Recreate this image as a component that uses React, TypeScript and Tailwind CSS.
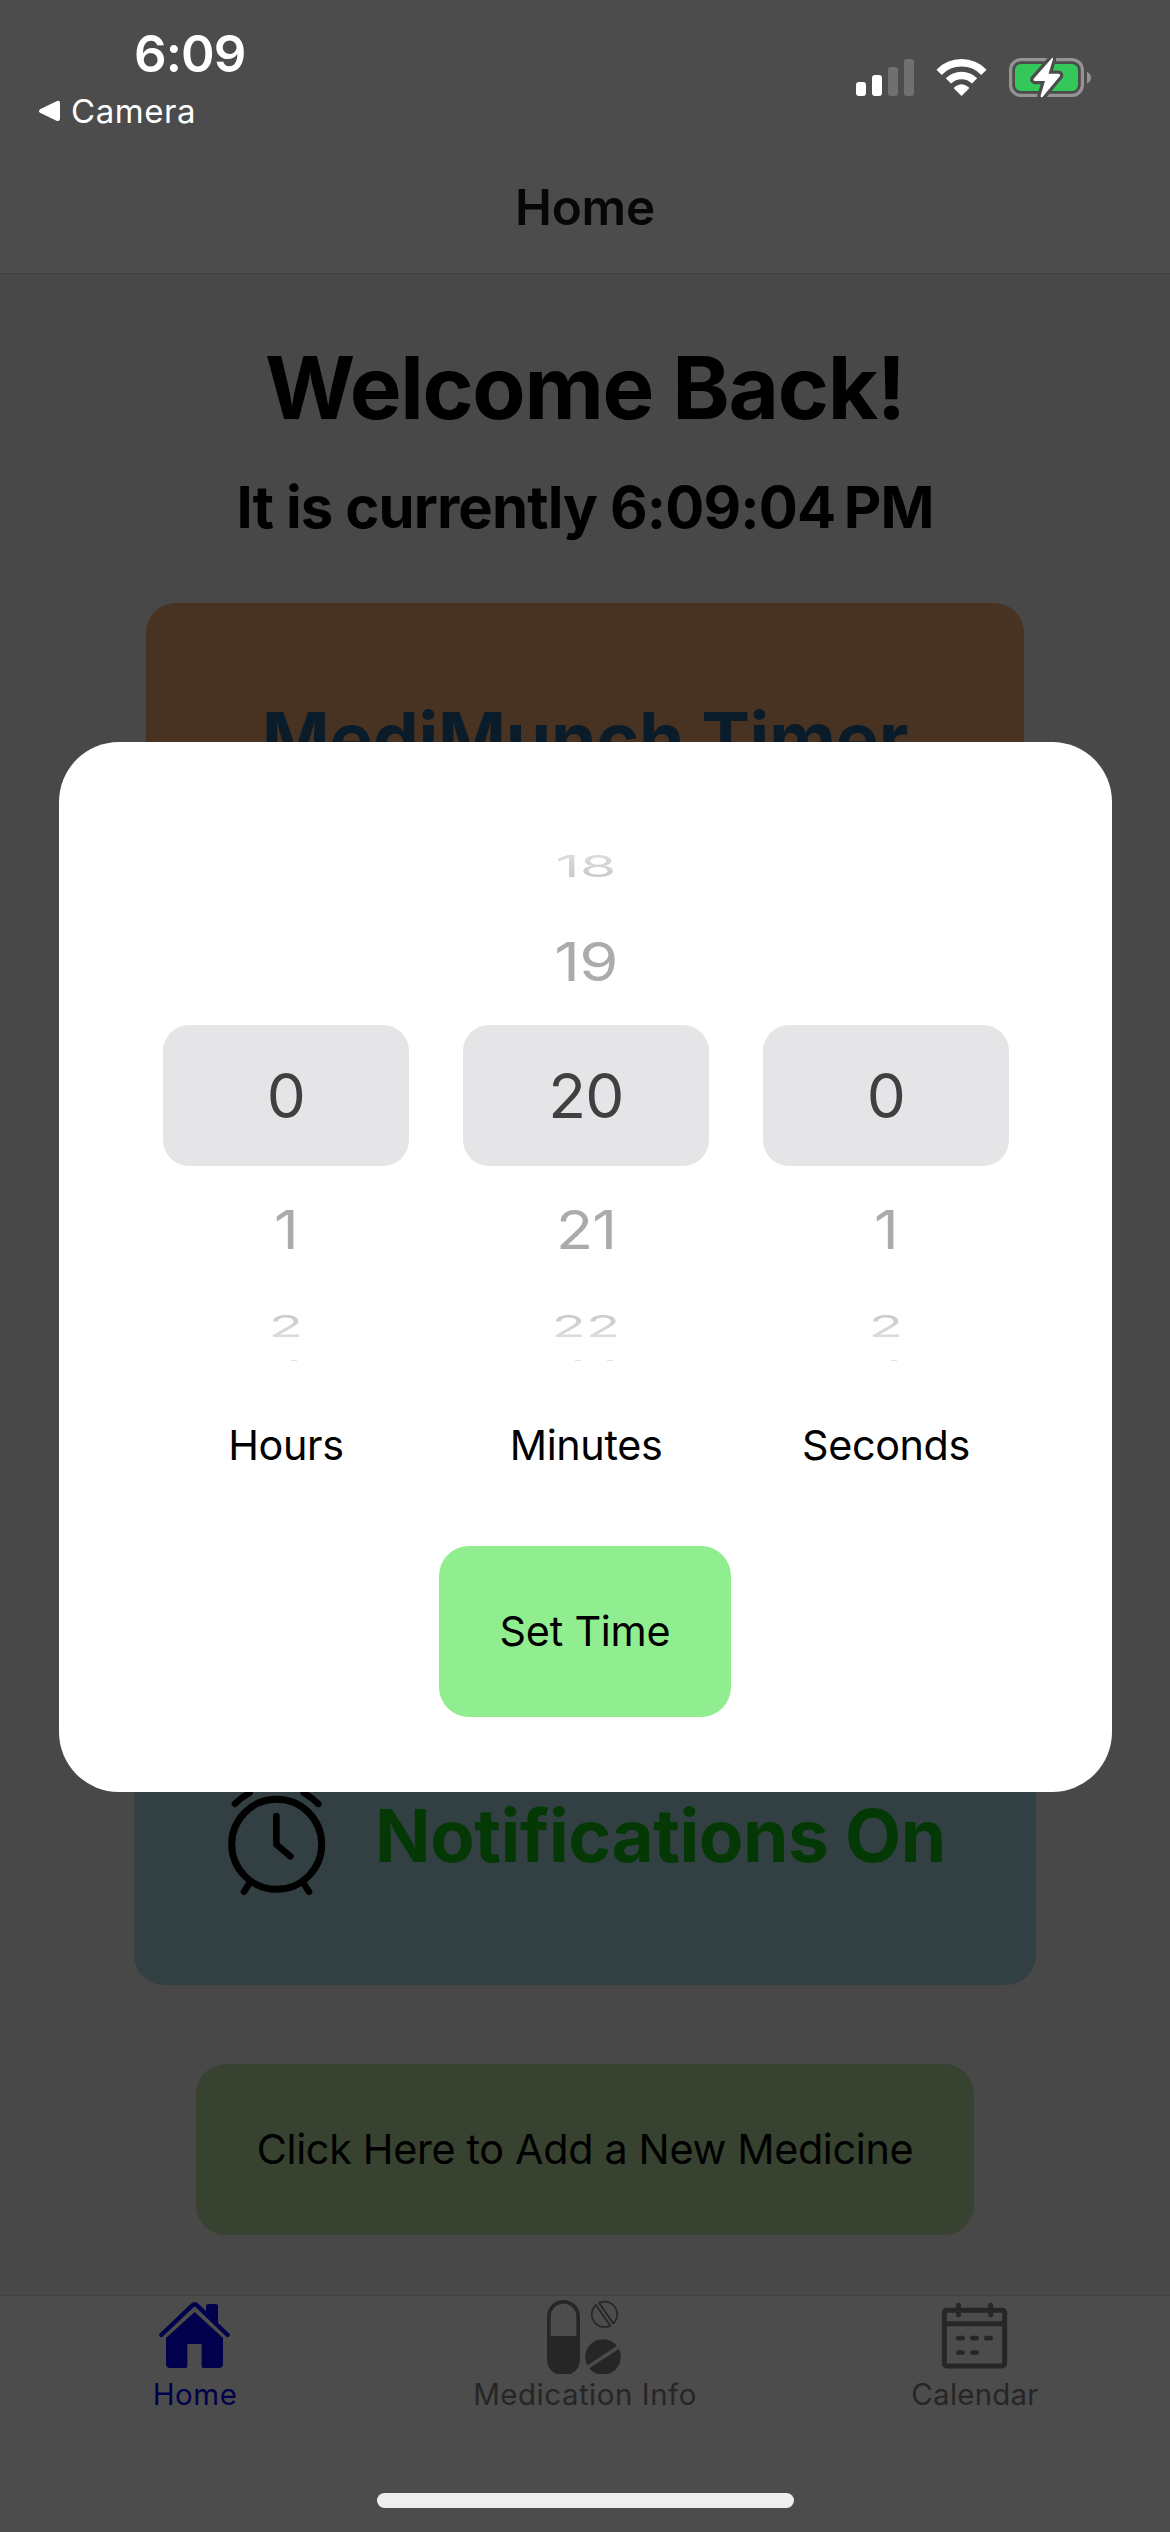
type Row = { label: string; values: [string, string, string, string, string]; marks: string[] };

const columns: Row[] = [
  { label: "Hours", values: ["", "", "0", "1", "2"], marks: ["left-[128px]"] },
  { label: "Minutes", values: ["18", "19", "20", "21", "22"], marks: ["left-[112px]", "left-[144px]"] },
  { label: "Seconds", values: ["", "", "0", "1", "2"], marks: ["left-[128px]"] },
];

function StatusIcons() {
  return (
    <svg className="mt-[50px] mr-[70px] h-[56px] w-[250px]" viewBox="850 50 250 56" fill="none">
      <rect x="856" y="82" width="10" height="14" rx="3" fill="#fff" />
      <rect x="872" y="75" width="10" height="21" rx="3" fill="#fff" />
      <rect x="888" y="67" width="10" height="29" rx="3" fill="#707070" />
      <rect x="904" y="59" width="10" height="37" rx="3" fill="#707070" />
      <path d="M939.1 72.3A31.2 31.2 0 0 1 983.9 72.3" stroke="#fff" strokeWidth="7.4" />
      <path d="M948.4 80.9A18.5 18.5 0 0 1 974.6 80.9" stroke="#fff" strokeWidth="7.4" />
      <path d="M961.5 96L954.2 88.7Q953.6 87.8 954.6 87Q961.5 81.6 968.4 87Q969.4 87.8 968.8 88.7Z" fill="#fff" />
      <rect x="1010.6" y="59.6" width="71.8" height="35.8" rx="10.5" stroke="#949494" strokeWidth="3.2" />
      <rect x="1015" y="64" width="63" height="27" rx="6" fill="#34c759" />
      <path d="M1087 72Q1091 73.5 1091 77.5T1087 83.5Z" fill="#949494" />
      <path
        d="M1052 58L1033.5 79Q1033 80.8 1035 81H1045L1040.5 96Q1041 98 1042.5 97L1060 76Q1060.5 74 1058.5 73.7H1048.5L1053 59Q1053 57.3 1052 58Z"
        fill="#4c4c4c"
        stroke="#4c4c4c"
        strokeWidth="6.5"
        strokeLinejoin="round"
      />
      <path
        d="M1052 58L1033.5 79Q1033 80.8 1035 81H1045L1040.5 96Q1041 98 1042.5 97L1060 76Q1060.5 74 1058.5 73.7H1048.5L1053 59Q1053 57.3 1052 58Z"
        fill="#fff"
      />
    </svg>
  );
}

function AlarmIcon() {
  return (
    <svg className="h-[121px] w-[101px] shrink-0" viewBox="226 1775 101 121" fill="none" stroke="#000" strokeWidth="6.6" strokeLinecap="round" strokeLinejoin="round">
      <circle cx="276.7" cy="1844.3" r="45" strokeWidth="7" />
      <path d="M276.4 1816V1844.5L290.3 1856.3" />
      <path d="M235 1803.8Q241 1797.5 249.5 1792.8M318.3 1803.8Q312 1797.5 303.8 1792.8" />
      <path d="M250 1882.5L244 1891.7M303 1882.5L309 1891.7" />
    </svg>
  );
}

function HomeIcon() {
  return (
    <svg className="h-[74px] w-[74px]" viewBox="84 60 222 222" fill="#00004c">
      <path d="M94 165L187 76Q194 70 201 76L293 165" fill="none" stroke="#00004c" strokeWidth="13" strokeLinecap="round" />
      <path d="M228 96V79q0-7 7-7h22q7 0 7 7v53z" />
      <path d="M194 96L279 174V251q0 13-13 13H220q-5 0-5-5V192H172V259q0 5-5 5H121q-13 0-13-13V174Z" />
    </svg>
  );
}

function PillsIcon() {
  return (
    <svg className="h-[74px] w-[74px] overflow-visible" viewBox="294 60 222 222" fill="#262626">
      <path
        fillRule="evenodd"
        d="M291 109.5A49.5 49.5 0 0 1 390 109.5V237.5A49.5 49.5 0 0 1 362.2 282H318.8A49.5 49.5 0 0 1 291 237.5ZM302 168H379V109.5A38.5 38.5 0 0 0 302 109.5Z"
      />
      <circle cx="463.5" cy="103" r="38" fill="none" stroke="#262626" strokeWidth="5" />
      <path d="M438 65L490 140" stroke="#4c4c4c" strokeWidth="9" />
      <path d="M437 74L480 136M447 68L490 131" stroke="#262626" strokeWidth="5" />
      <path d="M475 282A53.5 53.5 0 1 0 443 282Z" />
      <path d="M408 265L510 198" stroke="#4c4c4c" strokeWidth="10" />
    </svg>
  );
}

function CalendarIcon() {
  return (
    <svg className="h-[74px] w-[74px]" viewBox="174 60 222 222" fill="none" stroke="#262626" strokeWidth="15" strokeLinecap="round">
      <rect x="193" y="91" width="181" height="167" rx="7" />
      <path d="M193 131H374" strokeLinecap="butt" />
      <path d="M235.5 76V104M332 76V104" />
      <path d="M235 174.500H248M277 174.500H290M319 174.500H332M235 217.500H248M277 217.500H290" strokeWidth="14" />
    </svg>
  );
}

function Header() {
  return (
    <header className="flex h-[274px] flex-col border-b border-[#404040] bg-[#4c4c4c]">
      <div className="flex h-[141px] justify-between text-white">
        <div className="pt-[24px]">
          <div className="pl-[134px] text-[51px] leading-[60px] font-semibold tracking-[-0.9px]">6:09</div>
          <div className="flex h-[54px] items-center gap-[11px] pl-[38px]">
            <svg className="h-[24px] w-[22px]" viewBox="0 0 22 24" fill="#fff">
              <path d="M2 10.2Q0 12 2 13.8L18.5 21.8Q22 22.8 22 19.5V4Q22 1 18.5 2.2Z" />
            </svg>
            <div className="text-[33px] leading-[54px] tracking-[0.56px]">Camera</div>
          </div>
        </div>
        <StatusIcons />
      </div>
      <div className="h-[132px] text-center text-[49.5px] leading-[132px] font-semibold tracking-[-0.21px] text-[#070707]">Home</div>
    </header>
  );
}

function Wheel({ label, values, marks }: Row) {
  const [a, b, c, d, e] = values;
  return (
    <div className="flex w-[246px] flex-col text-center">
      <div className="h-[66px] scale-x-[0.96] scale-y-[0.49] bg-linear-to-b from-[#e0e0e0] to-[#c6c6c6] bg-clip-text text-[62px] leading-[66px] text-transparent">{a}</div>
      <div className="h-[126px] scale-x-[1.02] scale-y-[0.86] text-[62px] leading-[126px] tracking-[-0.8px] text-[#ababab]">{b}</div>
      <div className="h-[141px] rounded-[26px] bg-[#e5e5e7] text-[62px] leading-[142px] tracking-[-0.8px] text-[#404042]">{c}</div>
      <div className="mt-px h-[126px] scale-x-[0.98] scale-y-[0.86] text-[62px] leading-[126px] tracking-[-0.8px] text-[#ababab]">{d}</div>
      <div className="h-[66px] scale-x-[0.91] scale-y-[0.49] bg-linear-to-b from-[#c6c6c6] to-[#e0e0e0] bg-clip-text text-[62px] leading-[66px] text-transparent">{e}</div>
      <div className="relative h-[61px]">
        {marks.map((m) => (
          <span key={m} className={`absolute top-px h-px w-[6px] bg-[#e2e2e2] ${m}`} />
        ))}
      </div>
      <div className="h-[50px] text-[41.3px] leading-[50px] tracking-[-0.35px] text-black">{label}</div>
    </div>
  );
}

function TimeModal() {
  return (
    <div className="absolute top-[742px] left-[58.5px] flex h-[1050px] w-[1053px] flex-col items-center rounded-[60px] bg-white pt-[91px]">
      <div className="flex gap-[54px] pl-[2px]">
        {columns.map((c) => (
          <Wheel key={c.label} {...c} />
        ))}
      </div>
      <button className="mt-[76px] h-[171px] w-[292px] rounded-[30px] bg-[#90ee90] text-[41.3px] leading-[171px] tracking-[-0.22px] text-black">Set Time</button>
    </div>
  );
}

export default function App() {
  return (
    <div className="relative flex h-[2532px] w-[1170px] flex-col overflow-hidden bg-[#484848] font-['Inter',sans-serif] whitespace-nowrap">
      <Header />
      <main className="flex h-[2021px] flex-col items-center pt-[61px] text-black">
        <h1 className="h-[105px] text-[87px] leading-[105px] font-bold tracking-[-1.3px]">Welcome Back!</h1>
        <h2 className="mt-[31px] h-[72px] text-[58px] leading-[72px] font-bold tracking-[-0.87px]">It is currently 6:09:04{"\u202f"}PM</h2>
        <section className="mt-[60px] h-[500px] w-[878px] rounded-[30px] bg-[#483222] pt-[91px] text-center text-[73px] leading-[90px] font-bold tracking-[-0.25px] text-[#0a1c29]">
          MediMunch Timer
        </section>
        <section className="mt-[583px] flex h-[299px] w-[902px] items-center gap-[48px] rounded-[30px] bg-[#334043] pl-[92px]">
          <AlarmIcon />
          <span className="text-[73px] leading-[90px] font-bold tracking-[-0.52px] text-[#043805]">Notifications On</span>
        </section>
        <button className="mt-[79px] h-[171px] w-[778px] rounded-[30px] bg-[#374230] text-[41.3px] leading-[171px] tracking-[-0.32px]">Click Here to Add a New Medicine</button>
      </main>
      <nav className="flex h-[237px] border-t border-[#404040] bg-[#4c4c4c] pt-[4px] text-[29.5px] leading-[40px] text-[#262626]">
        <div className="flex w-[390px] flex-col items-center text-[#00004c]">
          <HomeIcon />
          <span className="tracking-[0.52px]">Home</span>
        </div>
        <div className="flex w-[390px] flex-col items-center">
          <PillsIcon />
          <span className="tracking-[0.51px]">Medication Info</span>
        </div>
        <div className="flex w-[390px] flex-col items-center">
          <CalendarIcon />
          <span className="tracking-[0.21px]">Calendar</span>
        </div>
      </nav>
      <TimeModal />
      <div className="absolute top-[2493px] left-[377px] h-[15px] w-[417px] rounded-full bg-[#eeeeee]" />
    </div>
  );
}
